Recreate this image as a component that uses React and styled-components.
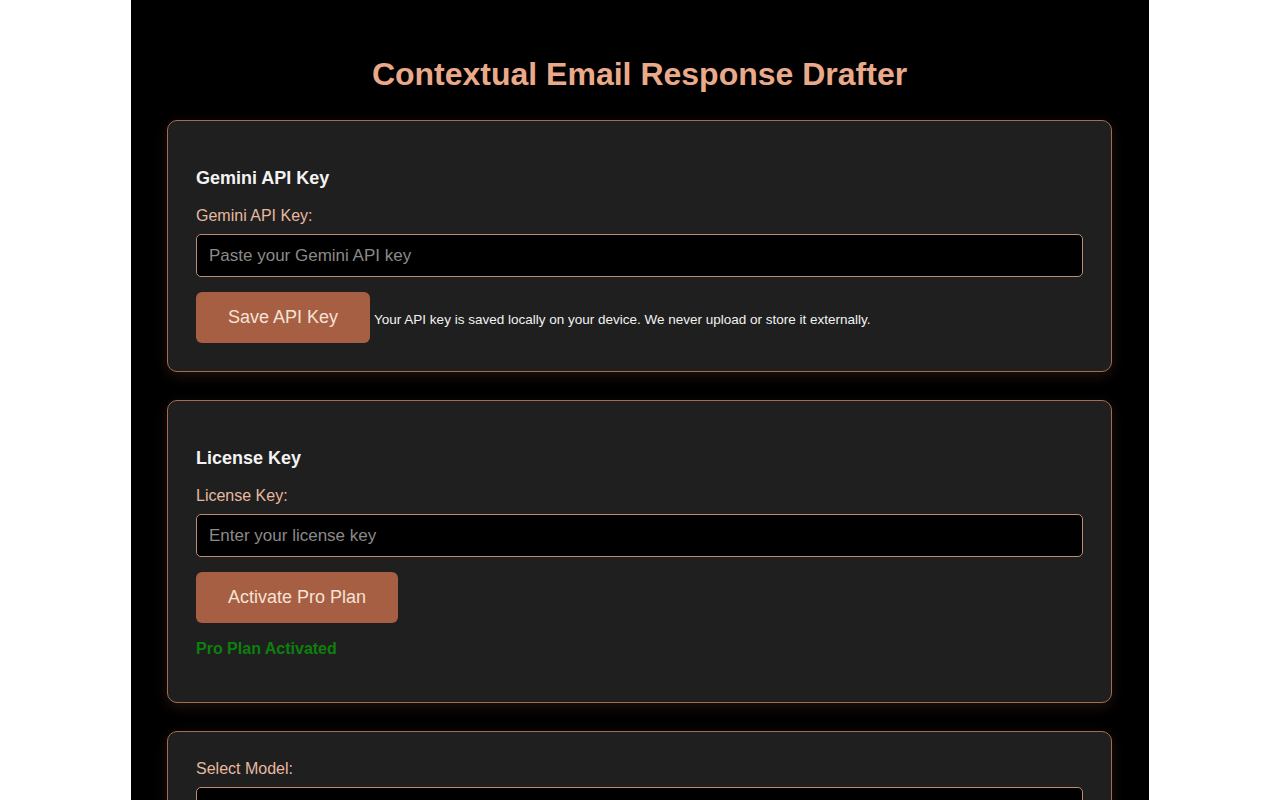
import styled, { createGlobalStyle } from "styled-components";

const GlobalStyle = createGlobalStyle`
  body {
    margin: 0;
    background: #ffffff;
    font-family: "Liberation Sans", Arial, sans-serif;
  }
`;

const Container = styled.div`
  width: 1018px;
  min-height: 100vh;
  margin: 0 auto;
  padding: 56px 37px 40px 36px;
  box-sizing: border-box;
  background: #000000;
`;

const Heading = styled.h1`
  margin: 0 0 27px;
  font-size: 32px;
  line-height: 37px;
  font-weight: 700;
  text-align: center;
  color: #eaaa8a;
`;

const Card = styled.section`
  background: #1f1f1f;
  border: 1px solid #a86a50;
  border-radius: 10px;
  padding: 28px;
  margin-bottom: 28px;
  box-shadow: 0 4px 14px rgba(110, 70, 50, 0.28);
`;

const CardTitle = styled.h3`
  margin: 19px 0 18px;
  font-size: 18px;
  line-height: 21px;
  font-weight: 700;
  color: #f3f3f3;
`;

const Label = styled.label`
  display: block;
  font-size: 16px;
  line-height: 18px;
  color: #e6b9a0;
  margin-bottom: 9px;
`;

const Input = styled.input`
  display: block;
  width: 100%;
  height: 43px;
  box-sizing: border-box;
  padding: 0 12px;
  background: #000000;
  border: 1px solid #c08a70;
  border-radius: 5px;
  color: #eeeeee;
  font-family: "Liberation Sans", Arial, sans-serif;
  font-size: 17px;
  outline: none;

  &::placeholder {
    color: #8a8a8a;
  }
`;

const Select = styled.select`
  display: block;
  width: 100%;
  height: 43px;
  box-sizing: border-box;
  padding: 0 12px;
  background: #000000;
  border: 1px solid #c08a70;
  border-radius: 5px;
  color: #eeeeee;
  font-size: 17px;
  font-family: "Liberation Sans", Arial, sans-serif;
`;

const ActionRow = styled.div`
  display: flex;
  align-items: center;
  gap: 4px;
  margin-top: 15px;
`;

const Button = styled.button`
  height: 51px;
  padding: 0 32px;
  background: #a65f43;
  border: none;
  border-radius: 6px;
  color: #f6e2d6;
  font-family: "Liberation Sans", Arial, sans-serif;
  font-size: 18px;
  cursor: pointer;
`;

const Note = styled.span`
  font-size: 13.5px;
  color: #f2f2f2;
  padding-top: 3px;
`;

const Status = styled.p`
  margin: 17px 0 16px;
  font-size: 16px;
  line-height: 18px;
  font-weight: 700;
  color: #0d7f0d;
`;

export default function App() {
  return (
    <>
      <GlobalStyle />
      <Container>
        <Heading>Contextual Email Response Drafter</Heading>

        <Card>
          <CardTitle>Gemini API Key</CardTitle>
          <Label htmlFor="apiKey">Gemini API Key:</Label>
          <Input id="apiKey" type="password" placeholder="Paste your Gemini API key" />
          <ActionRow>
            <Button>Save API Key</Button>
            <Note>
              Your API key is saved locally on your device. We never upload or store it externally.
            </Note>
          </ActionRow>
        </Card>

        <Card>
          <CardTitle>License Key</CardTitle>
          <Label htmlFor="license">License Key:</Label>
          <Input id="license" type="text" placeholder="Enter your license key" />
          <ActionRow>
            <Button>Activate Pro Plan</Button>
          </ActionRow>
          <Status>Pro Plan Activated</Status>
        </Card>

        <Card>
          <Label htmlFor="model">Select Model:</Label>
          <Select id="model">
            <option>Gemini 1.5 Flash</option>
          </Select>
        </Card>
      </Container>
    </>
  );
}
